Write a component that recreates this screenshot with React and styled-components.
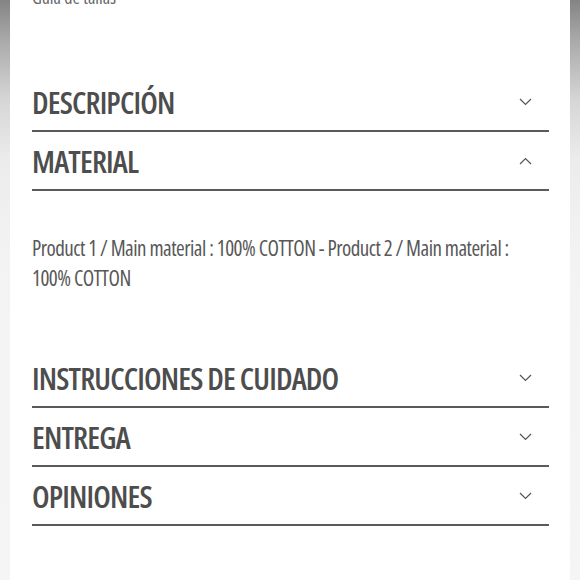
import React, { useState } from 'react';
import styled, { createGlobalStyle } from 'styled-components';

const Global = createGlobalStyle`
  html, body {
    margin: 0;
    padding: 0;
    background: #fff;
  }
  body {
    font-family: "Open Sans", "Liberation Sans", sans-serif;
    font-stretch: 75%;
    -webkit-font-smoothing: antialiased;
  }
`;

const sections = [
  { id: 'desc', title: 'DESCRIPCIÓN' },
  {
    id: 'material',
    title: 'MATERIAL',
    body: 'Product 1 / Main material : 100% COTTON - Product 2 / Main material : 100% COTTON',
  },
  { id: 'care', title: 'INSTRUCCIONES DE CUIDADO' },
  { id: 'delivery', title: 'ENTREGA' },
  { id: 'reviews', title: 'OPINIONES' },
];

const Chevron = ({ up }) => (
  <svg width="13" height="8" viewBox="0 0 13 8" fill="none">
    <polyline
      points={up ? '1,7 6.5,1.5 12,7' : '1,1 6.5,6.5 12,1'}
      stroke="#555"
      strokeWidth="1.2"
      strokeLinejoin="miter"
    />
  </svg>
);

export default function App() {
  const [open, setOpen] = useState('material'); // 열린 섹션

  return (
    <Screen>
      <Global />
      <Edge />
      <Page>
        <SizeGuide>Guía de tallas</SizeGuide>
        <Accordion>
          {sections.map((s) => (
            <Section key={s.id}>
              <Header onClick={() => setOpen(open === s.id ? '' : s.id)}>
                <Title>{s.title}</Title>
                <Chevron up={open === s.id} />
              </Header>
              {open === s.id && s.body && <Panel>{s.body}</Panel>}
            </Section>
          ))}
        </Accordion>
      </Page>
      <Edge />
    </Screen>
  );
}

const Screen = styled.div`
  display: flex;
  width: 580px;
  height: 580px;
  overflow: hidden;
  background: #fff;
`;

const Edge = styled.div`
  flex: 0 0 10px;
  background: linear-gradient(
    to bottom,
    #848484 0px,
    #a9a9a9 40px,
    #d6d6d6 100px,
    #ececec 160px,
    #f3f3f3 260px,
    #f5f5f5 100%
  );
`;

const Page = styled.div`
  flex: 1;
  padding: 0 21px 0 22px;
  display: flex;
  flex-direction: column;
`;

const SizeGuide = styled.a`
  display: block;
  margin-top: -14px;
  font-size: 18px;
  line-height: 22px;
  color: #666;
  cursor: pointer;
`;

const Accordion = styled.div`
  margin-top: 65px;
  display: flex;
  flex-direction: column;
`;

const Section = styled.div``;

const Header = styled.div`
  height: 57px;
  display: flex;
  align-items: center;
  justify-content: space-between;
  padding-right: 17px;
  border-bottom: 2px solid #5a5a5a;
  cursor: pointer;
`;

const Title = styled.h3`
  margin: 0;
  font-size: 31px;
  font-weight: 550;
  color: #4d4d4d;
  letter-spacing: -0.85px;
`;

const Panel = styled.p`
  margin: 0;
  padding: 42px 0 56px;
  font-size: 21px;
  line-height: 30px;
  letter-spacing: -0.5px;
  color: #585858;
`;
